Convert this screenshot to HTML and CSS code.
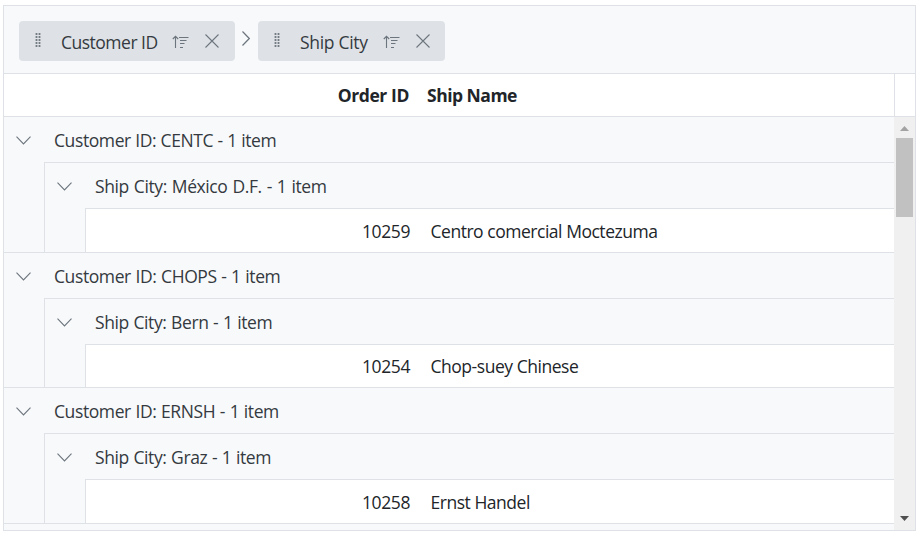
FILE: index.html
```html
<!DOCTYPE html>
<html lang="en">
<head>
<meta charset="utf-8">
<title>Orders</title>
<link rel="stylesheet" href="styles.css">
</head>
<body>
<svg class="defs" width="0" height="0">
  <symbol id="grip" viewBox="0 0 6 14"><path d="M1.5 0V14M4.5 0V14" fill="none" stroke="#737b83" stroke-width="1.8" stroke-dasharray="2 1"/></symbol>
  <symbol id="sort" viewBox="0 0 17 14"><path d="M3.5 13V1.5M.8 4L3.5 1.3L6.2 4M7 2.5H16.5M8 5.5H14.5M8 8.5H12.5M8 12.5H11" fill="none" stroke="#6c757d" stroke-width="1.1"/></symbol>
  <symbol id="close" viewBox="0 0 14 14"><path d="M.5 .5L13.5 13.5M13.5 .5L.5 13.5" fill="none" stroke="#6c757d" stroke-width="1.1"/></symbol>
  <symbol id="next" viewBox="0 0 8 15"><path d="M.5 .5L7.3 7.5L.5 14.5" fill="none" stroke="#6c757d" stroke-width="1.2"/></symbol>
  <symbol id="down" viewBox="0 0 15 9"><path d="M.5 .7L7.5 7.9L14.5 .7" fill="none" stroke="#6c757d" stroke-width="1.1"/></symbol>
</svg>
<main class="grid">
  <div class="grouping">
    <div class="chip chip-customer"><svg class="grip"><use href="#grip"/></svg><span class="chip-text">Customer ID</span><svg class="sort"><use href="#sort"/></svg><svg class="close"><use href="#close"/></svg></div>
    <svg class="next"><use href="#next"/></svg>
    <div class="chip chip-city"><svg class="grip"><use href="#grip"/></svg><span class="chip-text">Ship City</span><svg class="sort"><use href="#sort"/></svg><svg class="close"><use href="#close"/></svg></div>
  </div>
  <div class="header">
    <div class="columns"><span class="col-id">Order ID</span><span class="col-name">Ship Name</span></div>
  </div>
  <div class="body">
    <div class="rows">
      <section class="group">
        <div class="caption tight"><svg class="down"><use href="#down"/></svg><span>Customer ID: CENTC - 1 item</span></div>
        <div class="subgroup">
          <div class="caption loose"><svg class="down"><use href="#down"/></svg><span>Ship City: México D.F. - 1 item</span></div>
          <div class="record"><span class="id">10259</span><span class="name">Centro comercial Moctezuma</span></div>
        </div>
      </section>
      <section class="group short">
        <div class="caption"><svg class="down"><use href="#down"/></svg><span>Customer ID: CHOPS - 1 item</span></div>
        <div class="subgroup">
          <div class="caption"><svg class="down"><use href="#down"/></svg><span>Ship City: Bern - 1 item</span></div>
          <div class="record"><span class="id">10254</span><span class="name">Chop-suey Chinese</span></div>
        </div>
      </section>
      <section class="group">
        <div class="caption"><svg class="down"><use href="#down"/></svg><span>Customer ID: ERNSH - 1 item</span></div>
        <div class="subgroup">
          <div class="caption"><svg class="down"><use href="#down"/></svg><span>Ship City: Graz - 1 item</span></div>
          <div class="record"><span class="id">10258</span><span class="name">Ernst Handel</span></div>
        </div>
      </section>
    </div>
    <div class="scrollbar">
      <svg class="arrow" viewBox="0 0 9 5"><path d="M0 5L4.5 0L9 5Z" fill="#a3a3a3"/></svg>
      <div class="thumb"></div>
      <svg class="arrow arrow-down" viewBox="0 0 9 5"><path d="M0 0L4.5 5L9 0Z" fill="#505050"/></svg>
    </div>
  </div>
</main>
</body>
</html>
```
FILE: styles.css
```css
* { box-sizing: border-box; }
body { margin: 0; background: #fff; font: 17.5px/24px "Open Sans", "Noto Sans", sans-serif; letter-spacing: -0.4px; color: #212529; }
svg { display: block; flex: none; }
.defs { position: absolute; }
span { white-space: nowrap; }
.grid { width: 913px; height: 526px; margin: 5px 0 0 3px; border: 1px solid #dee2e6; display: flex; flex-direction: column; }
.grouping { height: 68px; flex: none; background: #f8f9fb; border-bottom: 1px solid #dee2e6; padding: 15px; display: flex; }
.chip { height: 40px; background: #dee2e6; border-radius: 4px; padding-left: 16px; display: flex; color: #343a40; }
.chip-customer { width: 216px; }
.chip-city { width: 187px; }
.chip-text { margin: 9px 0 0 20px; letter-spacing: -0.5px; }
.chip-customer .chip-text { width: 100px; }
.chip-city .chip-text { width: 72px; letter-spacing: -0.3px; }
.grip { width: 6px; height: 14px; margin-top: 12px; }
.sort { width: 17px; height: 14px; margin: 14px 0 0 11px; }
.close { width: 14px; height: 14px; margin: 13px 0 0 16px; }
.next { width: 8px; height: 15px; margin: 10px 8px 0 7px; }
.header { height: 43px; flex: none; border-bottom: 1px solid #dee2e6; font-weight: 700; }
.columns { width: 891px; height: 42px; border-right: 1px solid #dee2e6; display: flex; align-items: center; padding-bottom: 1px; }
.col-id { width: 405px; text-align: right; margin-right: 18px; }
.col-name { letter-spacing: -0.5px; }
.body { flex: 1; display: flex; min-height: 0; }
.rows { width: 890px; background: #f8f9fb; }
.group { height: 136px; border-bottom: 1px solid #dee2e6; }
.group.short { height: 135px; }
.caption { height: 45px; padding: 1px 0 0 12px; display: flex; align-items: center; color: #343a40; word-spacing: 0.45px; }
.caption.tight { word-spacing: 0.25px; }
.caption.loose { word-spacing: 0.8px; }
.down { width: 15px; height: 9px; margin: 1px 23px 0 0; }
.subgroup { height: 90px; margin-left: 40px; border: solid #dee2e6; border-width: 1px 0 0 1px; }
.short .subgroup { height: 89px; }
.record { height: 44px; margin-left: 40px; border: solid #dee2e6; border-width: 1px 0 0 1px; background: #fff; display: flex; align-items: center; }
.short .record { height: 43px; }
.id { width: 324px; text-align: right; margin-right: 20.5px; }
.name { letter-spacing: -0.47px; }
.scrollbar { width: 21px; background: #f0f0f0; padding: 9px 2px; display: flex; flex-direction: column; }
.arrow { width: 9px; height: 5px; margin-left: 4px; }
.thumb { width: 17px; height: 79px; margin-top: 7px; background: #c1c1c1; }
.arrow-down { margin-top: auto; }
```
